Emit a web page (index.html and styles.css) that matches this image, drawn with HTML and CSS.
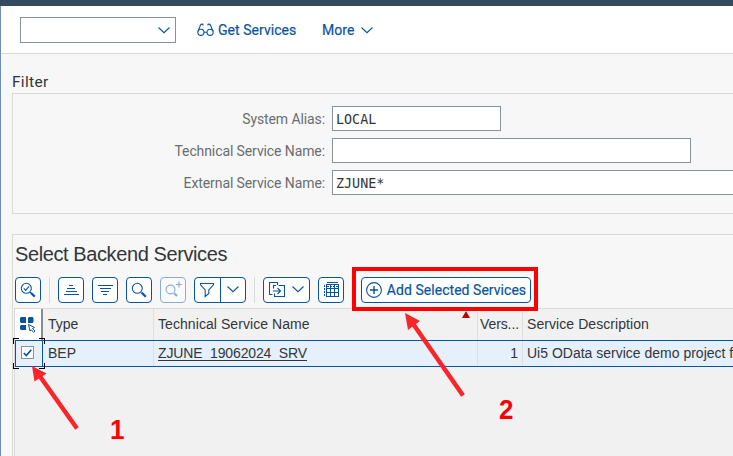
FILE: index.html
```html
<!DOCTYPE html>
<html lang="en">
<head>
<meta charset="utf-8">
<title>Add Selected Services</title>
<link rel="stylesheet" href="styles.css">
</head>
<body>
<div class="shell"></div>
<main class="page">
  <header class="toolbar">
    <div class="combo"><svg class="ic" width="12" height="7" viewBox="0 0 12 7"><path d="M.5 .5L6 5.7L11.500 .5"/></svg></div>
    <a class="action get"><svg class="ic" width="17" height="14" viewBox="0 0 17 14"><circle cx="3.900" cy="9.300" r="3.100"/><circle cx="13.100" cy="9.300" r="3.100"/><path d="M7 9.300H10M1 8.500L3.400 2.200Q4 .8 6 1.200V2.500M16 8.500L13.600 2.200Q13 .8 11 1.200V2.500"/></svg><span>Get Services</span></a>
    <a class="action more"><span>More</span><svg class="ic" width="12" height="7" viewBox="0 0 12 7"><path d="M.5 .5L6 5.7L11.500 .5"/></svg></a>
  </header>

  <section class="filter">
    <h2>Filter</h2>
    <div class="form">
      <label class="l1"><span>System Alias:</span></label><div class="field short">LOCAL</div>
      <label class="l2"><span>Technical Service Name:</span></label><div class="field medium"></div>
      <label class="l3"><span>External Service Name:</span></label><div class="field long">ZJUNE*</div>
    </div>
  </section>

  <section class="results">
    <h1>Select Backend Services</h1>
    <div class="buttons">
      <button class="btn"><svg class="ic" width="16" height="16" viewBox="0 0 16 16"><circle cx="6.300" cy="6.300" r="5"/><path d="M3.800 6.300L5.700 8.300L9 4.300M10.200 10.200L11.500 11.500"/><path class="thick" d="M11 11L14.800 14.600"/></svg></button>
      <i class="sep"></i>
      <button class="btn"><svg class="ic crisp" width="16" height="12" viewBox="0 0 16 12"><path d="M6 1.500H10M4 4.500H12M2.500 7.500H13.500M.5 10.500H15.500"/></svg></button>
      <button class="btn"><svg class="ic crisp" width="16" height="12" viewBox="0 0 16 12"><path d="M.5 1.500H15.500M2.500 4.500H13.500M4 7.500H12M6 10.500H10"/></svg></button>
      <button class="btn"><svg class="ic" width="16" height="16" viewBox="0 0 16 16"><circle cx="6.300" cy="6.300" r="5"/><path class="thick" d="M10.500 10.500L14.800 14.800"/></svg></button>
      <button class="btn off"><svg class="ic" width="18" height="18" viewBox="0 0 18 18"><circle cx="6.500" cy="8.500" r="4.400"/><path d="M12 3.500H18M15 .5V6.500"/><path class="thick" d="M10.200 12.200L13 15"/></svg></button>
      <button class="btn split"><span><svg class="ic" width="16" height="16" viewBox="0 0 16 16"><path d="M1.500 1.500H14.500V2.800L9.800 8V11.500L6.200 14.500V8L1.500 2.800Z"/></svg></span><span><svg class="ic" width="12" height="7" viewBox="0 0 12 7"><path d="M.5 .5L6 5.700L11.500 .5"/></svg></span></button>
      <i class="sep"></i>
      <button class="btn menu"><svg class="ic" width="16" height="16" viewBox="0 0 16 16"><path d="M3.500 12.500H.5V.5H8.500V3M9.500 3.500H15.500V14.500H5.500V11.500M4 9H11.500M8.500 6L11.500 9L8.500 12M4.500 6.500V3.500H7"/></svg><svg class="ic" width="12" height="7" viewBox="0 0 12 7"><path d="M.5 .5L6 5.700L11.500 .5"/></svg></button>
      <button class="btn"><svg class="ic crisp" width="15" height="15" viewBox="0 0 15 15"><path d="M2.500 2.500H14.500V14.500H2.500ZM2.500 6.500H14.500M2.500 10.500H14.500M6.500 2.500V14.500M10.500 2.500V14.500M3 .5H14"/><path stroke-dasharray="2 1" d="M.5 3V15M2.500 4.500H14.500"/></svg></button>
      <div class="highlight"><button class="btn add"><svg class="ic" width="16" height="16" viewBox="0 0 16 16"><circle cx="8" cy="8" r="7.400"/><path d="M4 8H12M8 4V12" stroke-width="1.400"/></svg><span>Add Selected Services</span></button></div>
    </div>

    <div class="table">
      <div class="row head">
        <div class="cell pick"><svg width="17" height="16" viewBox="0 0 17 16"><path fill="#0854a0" d="M1 0H5.500L6 .5V6H1L0 5V1ZM8 1L9 0H12.500L13.500 1V5L12.500 6H8ZM0 9L1 8H6V13H1L0 12Z"/><path fill="#fff" stroke="#0854a0" d="M8.500 7.500L14.500 10.500L12.500 11.500L15 14L13.500 15.300L11.300 12.800L10 14Z"/></svg></div>
        <div class="cell type">Type</div>
        <div class="cell name"><span>Technical Service Name</span><i class="sort"></i></div>
        <div class="cell vers">Vers...</div>
        <div class="cell desc"><span class="t-desc">Service Description</span></div>
      </div>
      <div class="row data">
        <div class="cell pick"><span class="check"><svg class="ic" width="9" height="8" viewBox="0 0 9 8"><path stroke-width="1.700" d="M.8 4L3.300 6.600L8.300 .8"/></svg></span>
          <i class="c tl"></i><i class="c tr"></i><i class="c bl"></i><i class="c br"></i></div>
        <div class="cell type">BEP</div>
        <div class="cell name"><u>ZJUNE_19062024_SRV</u></div>
        <div class="cell vers">1</div>
        <div class="cell desc"><span>Ui5 OData service demo project for</span></div>
      </div>
    </div>
  </section>
</main>

<svg class="notes" width="733" height="456" viewBox="0 0 733 456">
  <g fill="#fa2529"><path d="M32 366L46.500 373.500L34.500 381.500Z"/><path d="M405 313L420 321L408 330Z"/></g>
  <g stroke="#fa2529" stroke-width="4.500"><path d="M39 375L77 428.500"/><path d="M412.500 323L463 395.500"/></g>
  <text transform="translate(110 439) scale(.93 1)">1</text><text transform="translate(499 419) scale(.93 1)">2</text>
</svg>
</body>
</html>
```
FILE: styles.css
```css
* { box-sizing: border-box; }
body { margin: 0; width: 733px; height: 456px; overflow: hidden; background: #f7f7f7; font: 14px Roboto, sans-serif; color: #32363a; position: relative; display: flex; flex-direction: column; }
.ic { fill: none; stroke: #0854a0; stroke-width: 1.1; flex: none; display: block; }
.crisp { shape-rendering: crispEdges; }
.thick { stroke-width: 2.2; }
.shell { height: 6px; background: #354a5f; }
.page { flex: 1; border-left: 1px solid #6d8fb5; min-height: 0; display: flex; flex-direction: column; }
.toolbar { height: 48px; background: #fff; border-bottom: 1px solid #d9d9d9; display: flex; align-items: center; padding-left: 19px; flex: none; }
.combo { width: 156px; height: 26px; border: 1px solid #89919a; display: flex; align-items: center; justify-content: flex-end; padding: 2px 5px 0 0; }
.action { display: flex; align-items: center; color: #0854a0; line-height: 20px; padding-top: 1px; }
.action span, .add span { -webkit-text-stroke: .2px #0854a0; letter-spacing: .04px; }
.get { margin-left: 21px; gap: 4px; width: 125px; }
.more { gap: 7px; }
.filter h2 { margin: 19px 0 0 11px; height: 20px; font: 15.5px/18px Roboto, sans-serif; letter-spacing: .3px; }
.form { margin-left: 11px; height: 121px; border: 1px solid #d9d9d9; border-right: 0; display: grid; grid-template-columns: 312px 1fr; grid-auto-rows: 25px; gap: 7px; padding-top: 12px; }
.form label { color: #6a6d70; text-align: right; line-height: 27px; letter-spacing: -.1px; }
.field { background: #fff; border: 1px solid #89919a; font: 13.4px/25px "DejaVu Sans Mono", monospace; padding-left: 3px; }
.short { width: 169px; }
.medium { width: 359px; }
.long { border-right: 0; }
.results { margin: 20px 0 0 11px; border: 1px solid #d9d9d9; border-width: 1px 0 0 1px; flex: 1; display: flex; flex-direction: column; min-height: 0; }
h1 { margin: 7px 0 0 2px; height: 25px; font: 20px/25px "Liberation Sans", sans-serif; letter-spacing: -.4px; white-space: nowrap; flex: none; }
.buttons { display: flex; height: 41px; align-items: center; gap: 8px; padding: 4px 0 0 2px; flex: none; }
.btn { width: 26px; height: 26px; flex: none; border: 1px solid #0854a0; border-radius: 4px; background: #fff; padding: 0; display: flex; align-items: center; justify-content: center; font: 14px Roboto, sans-serif; color: #0854a0; }
.off { opacity: .45; }
.sep { width: 1px; height: 26px; background: #d9d9d9; flex: none; }
.split { width: 52px; }
.split span { flex: 1; align-self: stretch; display: flex; align-items: center; justify-content: center; }
.split span + span { border-left: 1px solid #0854a0; }
.menu { width: 47px; gap: 7px; }
.highlight { border: 4px solid #f00; width: 186px; height: 44px; display: flex; align-items: center; padding-left: 5px; margin-top: -2px; flex: none; z-index: 1; }
.add { width: 170px; gap: 5px; margin-top: 2px; }
.table { flex: 1; margin-left: 1px; border: 1px solid #d9d9d9; border-width: 1px 0 0 1px; background: #f1f1f1; font: 14px "Liberation Sans", sans-serif; }
.row { display: grid; grid-template-columns: 28px 111px 324px 45px 1fr; }
.head { height: 31px; }
.cell { display: flex; align-items: center; border-right: 1px solid #dfdfdf; padding: 0 0 2px 5px; white-space: nowrap; min-width: 0; position: relative; }
.head .pick { background: #fff; border-right: 2px solid #8c8c8c; padding: 0; justify-content: center; }
.data { height: 27px; background: #e5f0fa; border: 1px solid #0854a0; border-width: 1px 0; }
.data .pick { border: 1px solid #0854a0; border-width: 0 1px; justify-content: center; padding: 0 4px 2px 0; }
.data .vers { justify-content: flex-end; padding-right: 4px; }
.head .vers { padding-left: 2px; letter-spacing: -.1px; }
.name { letter-spacing: .07px; padding-left: 4px; }
.cell.desc { border: 0; overflow: hidden; padding-left: 4px; }
.t-desc { letter-spacing: .07px; }
.check { width: 13px; height: 13px; background: #fff; border: 1px solid #89919a; display: flex; align-items: center; justify-content: center; }
u { text-underline-offset: 2px; letter-spacing: -.14px; }
.sort { position: absolute; right: 7px; top: 2px; border: 4px solid transparent; border-top: 0; border-bottom: 7px solid #b00; }
.c { position: absolute; width: 6px; height: 6px; border: 0 solid #000; }
.tl { left: -3px; top: -3px; border-width: 1px 0 0 1px; }
.tr { right: -3px; top: -3px; border-width: 1px 1px 0 0; }
.bl { left: -3px; bottom: -3px; border-width: 0 0 1px 1px; }
.br { right: -3px; bottom: -3px; border-width: 0 1px 1px 0; }
.notes { position: absolute; left: 0; top: 0; z-index: 2; font: bold 28px "Liberation Sans", sans-serif; fill: #f00; }
```
